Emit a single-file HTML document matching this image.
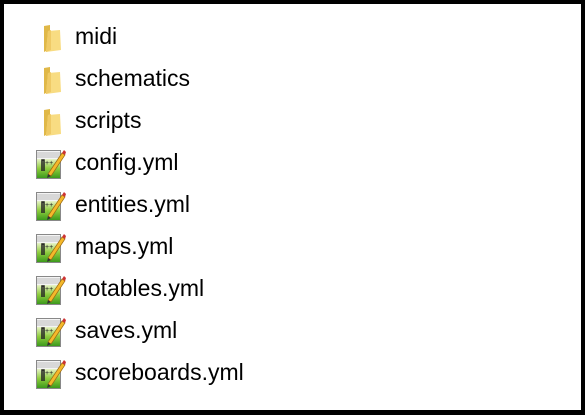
<!DOCTYPE html>
<html><head><style>
html,body{margin:0;padding:0;}
body{width:585px;height:415px;box-sizing:border-box;border:4px solid #000;border-bottom-width:5px;background:#fff;position:relative;overflow:hidden;font-family:"Liberation Sans",sans-serif;}
.r{position:absolute;left:0;height:42px;width:100%;}
.t{position:absolute;left:71px;top:1px;font-size:23px;color:#000;line-height:28px;}
.ic{position:absolute;left:30px;top:6px;}
</style></head><body>
<svg width="0" height="0" style="position:absolute">
<defs>
<linearGradient id="g" x1="0" y1="0" x2="0" y2="1"><stop offset="0" stop-color="#e8f3c8"/><stop offset="0.5" stop-color="#8fcd3e"/><stop offset="1" stop-color="#3c9a1c"/></linearGradient>
<g id="fold">
<path d="M6 1 L12 0 L12 24 L6 27 Z" fill="#e0b848"/>
<path d="M10 6 L22 5 L23 25 L8 27 Z" fill="#f8dc82"/>
<path d="M10 6 L13 5 L13 25 L8 27 Z" fill="#efca66"/>
</g>
<g id="file">
<rect x="2.5" y="2.5" width="24" height="28" fill="#f4f4f4" stroke="#888"/>
<path d="M3 5h23M3 7h23M3 9h23" stroke="#bbb" stroke-width="1"/>
<rect x="3" y="11" width="23" height="19" fill="url(#g)"/>
<path d="M8 23 V12 h2 V23" stroke="#222" stroke-width="1.5" fill="none"/>
<text x="11" y="17" font-size="7" font-family="Liberation Sans" fill="#222">++</text>
<path d="M14 26 L28 5 L31 7 L17 28 Z" fill="#f5b82a" stroke="#9b6a10" stroke-width="0.7"/>
<path d="M28 5 L30 2 L32 4 L31 7Z" fill="#c33"/>
<path d="M14 26 L17 28 L13 30 Z" fill="#333"/>
</g>
</defs></svg>

<div class="r" style="top:17px"><svg class="ic" width="34" height="32" style="top:4px"><use href="#fold" x="4" y="0"/></svg><div class="t">midi</div></div>
<div class="r" style="top:59px"><svg class="ic" width="34" height="32" style="top:4px"><use href="#fold" x="4" y="0"/></svg><div class="t">schematics</div></div>
<div class="r" style="top:101px"><svg class="ic" width="34" height="32" style="top:4px"><use href="#fold" x="4" y="0"/></svg><div class="t">scripts</div></div>
<div class="r" style="top:143px"><svg class="ic" width="34" height="32" style="top:1px"><use href="#file"/></svg><div class="t">config.yml</div></div>
<div class="r" style="top:185px"><svg class="ic" width="34" height="32" style="top:1px"><use href="#file"/></svg><div class="t">entities.yml</div></div>
<div class="r" style="top:227px"><svg class="ic" width="34" height="32" style="top:1px"><use href="#file"/></svg><div class="t">maps.yml</div></div>
<div class="r" style="top:269px"><svg class="ic" width="34" height="32" style="top:1px"><use href="#file"/></svg><div class="t">notables.yml</div></div>
<div class="r" style="top:311px"><svg class="ic" width="34" height="32" style="top:1px"><use href="#file"/></svg><div class="t">saves.yml</div></div>
<div class="r" style="top:353px"><svg class="ic" width="34" height="32" style="top:1px"><use href="#file"/></svg><div class="t">scoreboards.yml</div></div>
</body></html>
